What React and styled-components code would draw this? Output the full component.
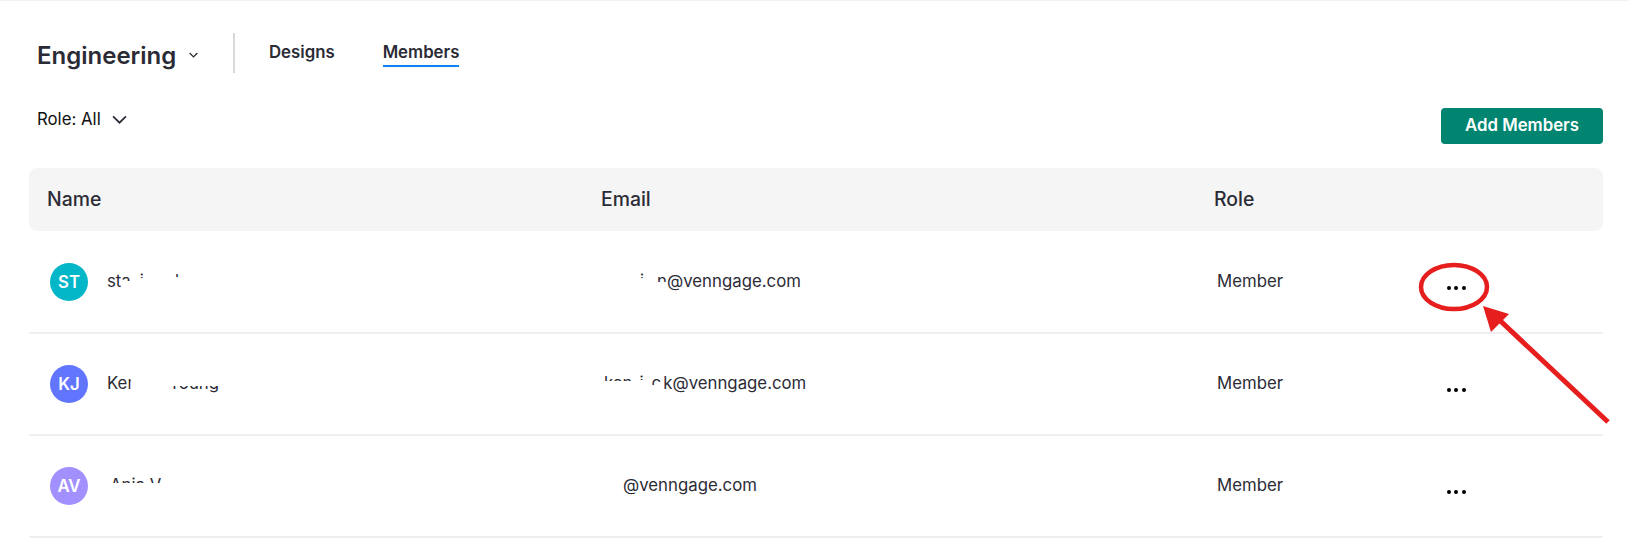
import React from 'react';
import styled, { createGlobalStyle } from 'styled-components';

const GlobalStyle = createGlobalStyle`
  html, body {
    margin: 0;
    background: #fff;
  }
  body {
    font-family: Inter, "Liberation Sans", sans-serif;
    color: #2a2a35;
  }
`;

const Page = styled.div`
  position: relative;
  width: 1629px;
  height: 550px;
  overflow: hidden;
  box-sizing: border-box;
  padding: 0 26px 0 29px;
  border-top: 1px solid #f2f2f2;
`;

const TopBar = styled.header`
  display: flex;
  align-items: stretch;
  height: 40px;
  margin-top: 32px;
  padding-left: 8px;
`;

const TeamSelect = styled.div`
  display: flex;
  align-items: center;
  gap: 13px;
  width: 196px;
  padding-top: 4px;
  box-sizing: border-box;
`;

const TeamName = styled.h1`
  margin: 2px 0 0;
  font-size: 24px;
  line-height: 34px;
  font-weight: 600;
  color: #2b2b36;
`;

const Divider = styled.div`
  width: 2px;
  background: #d9d9d9;
`;

const Tabs = styled.nav`
  display: flex;
  gap: 48px;
  margin-left: 34px;
`;

const Tab = styled.a`
  display: block;
  height: 32px;
  line-height: 38px;
  font-size: 16.8px;
  font-weight: 600;
  color: #2b2b36;
  border-bottom: 2px solid ${(p) => (p.$active ? '#0a84f5' : 'transparent')};
`;

const Toolbar = styled.div`
  display: flex;
  justify-content: space-between;
  align-items: flex-start;
  margin-top: 35px;
  padding-left: 8px;
`;

const RoleFilter = styled.div`
  display: flex;
  align-items: center;
  gap: 11px;
  height: 22px;
  font-size: 16.8px;
  color: #111;
`;

const AddButton = styled.button`
  width: 162px;
  height: 36px;
  padding: 0 0 2px;
  border: 0;
  border-radius: 4px;
  background: #018571;
  color: #fff;
  font-family: inherit;
  font-size: 16.8px;
  font-weight: 600;
`;

const Row = styled.div`
  display: grid;
  grid-template-columns: 554px 613px 230px 1fr;
  align-items: center;
  box-sizing: border-box;
  height: 102px;
  padding-left: 21px;
  border-bottom: 2px solid #efefef;
`;

const HeadRow = styled(Row)`
  height: 63px;
  margin: 24px 0 1px;
  padding: 0 0 2px 18px;
  border-bottom: 0;
  border-radius: 8px;
  background: #f5f5f5;
  font-size: 19.4px;
  font-weight: 500;
  color: #2b2b36;
`;

const NameCell = styled.div`
  display: flex;
  align-items: center;
  gap: 19px;
`;

const Avatar = styled.div`
  display: flex;
  align-items: center;
  justify-content: center;
  width: 38px;
  height: 38px;
  border-radius: 50%;
  background: ${(p) => p.$color};
  color: #fff;
  font-size: 16.8px;
  font-weight: 600;
`;

const CellText = styled.div`
  display: flex;
  font-size: 16.8px;
  line-height: 20px;
  color: #2b2b36;
  white-space: nowrap;
  transform: translateY(-1px);
`;

// what is left of a name the screenshot's author painted over
const Scrap = styled.span`
  display: inline-block;
  margin-left: ${(p) => p.$gap || 0}px;
  clip-path: inset(${(p) => p.$clip || '0'});
`;

const Dots = styled.div`
  display: flex;
  gap: 3.7px;
  transform: translateY(6px);
`;

const Dot = styled.span`
  width: 3.8px;
  height: 3.8px;
  border-radius: 50%;
  background: #000;
`;

const Annotation = styled.svg`
  position: absolute;
  left: 0;
  top: 0;
  pointer-events: none;
`;

const Chevron = ({ width, height, strokeWidth }) => (
  <svg width={width} height={height} viewBox="0 0 14 8" fill="none">
    <path d="M1 1l6 6 6-6" stroke="#2b2b36" strokeWidth={strokeWidth} />
  </svg>
);

const members = [
  {
    initials: 'ST',
    color: '#03b6c8',
    name: [
      { text: 'st' },
      { text: 'a', clip: '0 0 10px 0' },
      { text: 'i', gap: 9, clip: '0 0 13px 0' },
      { text: 'l', gap: 31, clip: '0 0 14px 0' },
    ],
    email: [
      { text: 'i', gap: 36, clip: '0 0 13px 0' },
      { text: 'n', gap: 13, clip: '0 0 9px 0' },
    ],
  },
  {
    initials: 'KJ',
    color: '#6175ff',
    name: [
      { text: 'Ker', clip: '0 3px 0 0' },
      { text: 'Young', gap: 35, clip: '13px 0 0 0' },
    ],
    email: [
      { text: 'ken', clip: '0 0 12px 0' },
      { text: 'i', gap: 7, clip: '0 0 13px 0' },
      { text: 'c', gap: 8, clip: '0 0 8px 0' },
      { text: 'k', gap: 2 },
    ],
  },
  {
    initials: 'AV',
    color: '#a390ff',
    name: [{ text: 'Ania V', gap: 3, clip: '0 0 12px 0' }],
    email: [{ text: '', gap: 19 }],
  },
];

const App = () => (
  <Page>
    <GlobalStyle />
    <TopBar>
      <TeamSelect>
        <TeamName>Engineering</TeamName>
        <Chevron width={9} height={6} strokeWidth={2} />
      </TeamSelect>
      <Divider />
      <Tabs>
        <Tab>Designs</Tab>
        <Tab $active>Members</Tab>
      </Tabs>
    </TopBar>

    <Toolbar>
      <RoleFilter>
        Role: All
        <Chevron width={15} height={9} strokeWidth={1.6} />
      </RoleFilter>
      <AddButton>Add Members</AddButton>
    </Toolbar>

    <HeadRow>
      <div>Name</div>
      <div>Email</div>
      <div>Role</div>
    </HeadRow>

    {members.map((m) => (
      <Row key={m.initials}>
        <NameCell>
          <Avatar $color={m.color}>{m.initials}</Avatar>
          <CellText>
            {m.name.map((s) => (
              <Scrap key={s.text} $gap={s.gap} $clip={s.clip}>
                {s.text}
              </Scrap>
            ))}
          </CellText>
        </NameCell>
        <CellText>
          {m.email.map((s) => (
            <Scrap key={s.text} $gap={s.gap} $clip={s.clip}>
              {s.text}
            </Scrap>
          ))}
          @venngage.com
        </CellText>
        <CellText>Member</CellText>
        <Dots>
          <Dot />
          <Dot />
          <Dot />
        </Dots>
      </Row>
    ))}

    <Annotation width="1629" height="550" viewBox="0 0 1629 550" fill="none">
      <ellipse cx="1454" cy="286" rx="33" ry="22" stroke="#e61e1e" strokeWidth="4.5" />
      <path d="M1608 421L1492 312" stroke="#e61e1e" strokeWidth="5" />
      <path d="M1483 305L1509 313L1491 331Z" fill="#e61e1e" />
    </Annotation>
  </Page>
);

export default App;
